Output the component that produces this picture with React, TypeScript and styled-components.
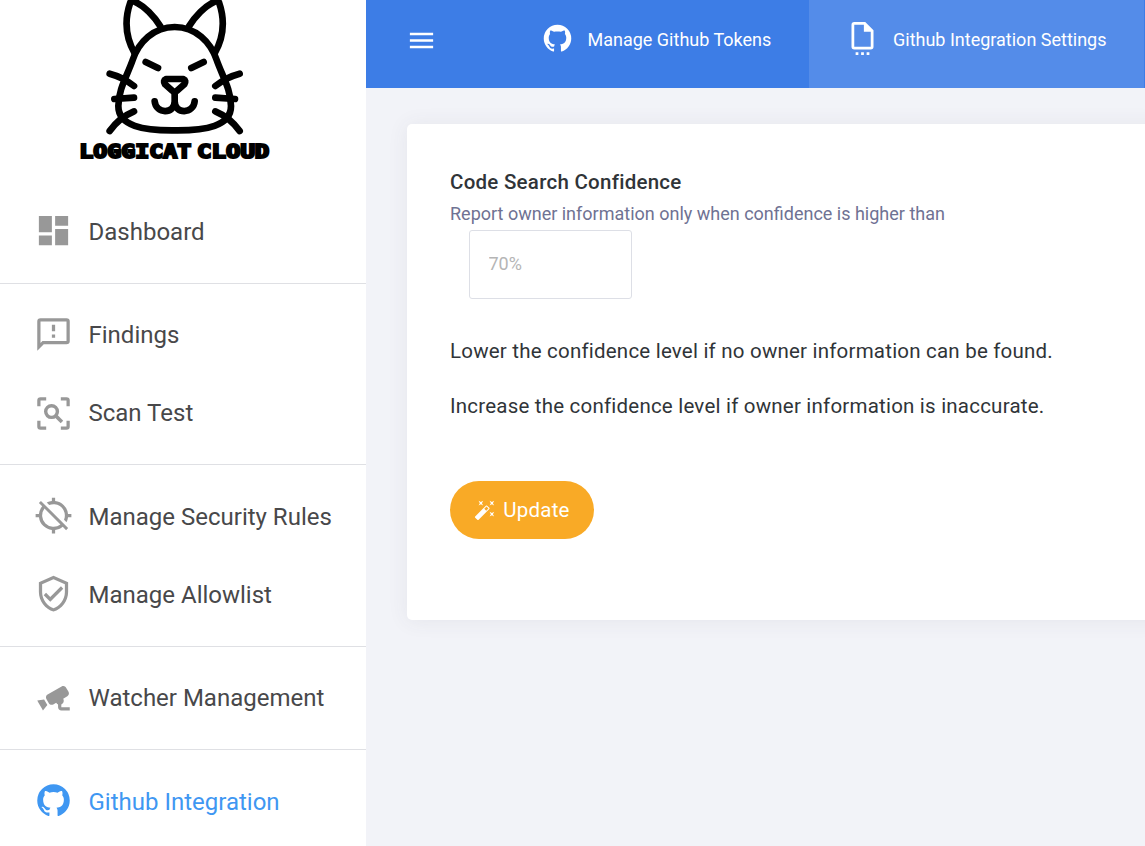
import React from "react";
import styled, { createGlobalStyle } from "styled-components";
import { MdDashboard, MdLocationDisabled } from "react-icons/md";

const GlobalStyle = createGlobalStyle`
  * { box-sizing: border-box; }
  body {
    margin: 0;
    overflow: hidden;
    background: #f2f3f8;
    font-family: Roboto, "Liberation Sans", sans-serif;
  }
`;

const Page = styled.div`
  display: flex;
  height: 846px;
  overflow: hidden;
`;

const Sidebar = styled.aside`
  flex: 0 0 366px;
  background: #fff;
`;

const Brand = styled.div`
  height: 180px;
  padding-left: 70px;
  svg { display: block; }
`;

const NavGroup = styled.nav<{ $top?: number; $bottom?: number }>`
  padding: ${(p) => p.$top ?? 12}px 0 ${(p) => p.$bottom ?? 12}px;
  border-bottom: 1px solid #dfe0e4;
  &:last-child { border-bottom: 0; }
`;

const NavItem = styled.a<{ $active?: boolean; $lift?: number }>`
  display: flex;
  align-items: center;
  height: 78px;
  padding-left: 34px;
  gap: 15.5px;
  font-size: 24px;
  color: ${(p) => (p.$active ? "#3f97f2" : "#48484a")};
  svg {
    flex: none;
    width: 39px;
    height: 39px;
    margin-bottom: ${(p) => p.$lift ?? 1}px;
    color: ${(p) => (p.$active ? "#3f97f2" : "#989898")};
  }
`;

const Main = styled.main`
  flex: 1;
  min-width: 0;
`;

const Header = styled.header`
  display: flex;
  height: 88px;
  background: #3d7de6;
  color: #fff;
`;

const MenuButton = styled.button`
  display: flex;
  width: 137.5px;
  height: 80px;
  padding: 0 0 0 40px;
  align-items: center;
  border: 0;
  background: none;
  color: inherit;
`;

const Tab = styled.a<{ $active?: boolean }>`
  display: flex;
  flex: none;
  width: ${(p) => (p.$active ? 335 : 305.5)}px;
  padding: 0 0 9px 37px;
  align-items: center;
  gap: 14px;
  font-size: 18px;
  white-space: nowrap;
  background: ${(p) => (p.$active ? "#548ce9" : "transparent")};
  svg { margin-bottom: 2px; }
`;

const Card = styled.section`
  margin: 36px 0 0 41px;
  width: 760px;
  height: 496px;
  padding: 44px 43px;
  border-radius: 5px;
  background: #fff;
  box-shadow: 0 1px 20px 1px rgba(69, 65, 78, 0.07);
`;

const Title = styled.h3`
  margin: 0;
  font-size: 20.5px;
  line-height: 28px;
  font-weight: 500;
  letter-spacing: 0.26px;
  color: #303438;
`;

const Hint = styled.p`
  margin: 4px 0 2px;
  font-size: 18px;
  line-height: 28px;
  color: #6f7293;
`;

const Field = styled.input`
  display: block;
  width: 163px;
  height: 69px;
  margin: 0 0 38px 19px;
  padding: 0 18.5px 2px;
  border: 1px solid #dddfe6;
  border-radius: 3px;
  font: 18px Roboto, sans-serif;
  &::placeholder { color: #b5b5b5; opacity: 1; }
`;

const Note = styled.p`
  margin: 0 0 27px;
  font-size: 20.5px;
  line-height: 28px;
  letter-spacing: 0.21px;
  white-space: nowrap;
  color: #303438;
`;

const UpdateButton = styled.button`
  display: flex;
  align-items: center;
  justify-content: center;
  gap: 7px;
  width: 144px;
  height: 58px;
  margin-top: 61px;
  padding: 0;
  border: 0;
  border-radius: 29px;
  background: #f9aa26;
  color: #fff;
  font: 20.5px Roboto, sans-serif;
  letter-spacing: 0.2px;
  svg { margin-bottom: 1px; }
`;

const Wordmark = styled.text`
  font: 700 56px "DejaVu Sans Mono", monospace;
  stroke: #000;
  stroke-width: 6px;
`;

const Glyph = ({ d, size = 39 }: { d: string; size?: number }) => (
  <svg width={size} height={size} viewBox="0 0 24 24" fill="currentColor" fillRule="evenodd">
    <path d={d} />
  </svg>
);

const github =
  "M12,2A10,10 0 0,0 2,12C2,16.42 4.87,20.17 8.84,21.5C9.34,21.58 9.5,21.27 9.5,21C9.5,20.77 9.5,20.14 9.5,19.31C6.73,19.91 6.14,17.97 6.14,17.97C5.68,16.81 5.03,16.5 5.03,16.5C4.12,15.88 5.1,15.9 5.1,15.9C6.1,15.97 6.63,16.93 6.63,16.93C7.5,18.45 8.97,18 9.54,17.76C9.63,17.11 9.89,16.67 10.17,16.42C7.95,16.17 5.62,15.31 5.62,11.5C5.62,10.39 6,9.5 6.65,8.79C6.55,8.54 6.2,7.5 6.75,6.15C6.75,6.15 7.59,5.88 9.5,7.17C10.29,6.95 11.15,6.84 12,6.84C12.85,6.84 13.71,6.95 14.5,7.17C16.41,5.88 17.25,6.15 17.25,6.15C17.8,7.5 17.45,8.54 17.35,8.79C18,9.5 18.38,10.39 18.38,11.5C18.38,15.32 16.04,16.16 13.81,16.41C14.17,16.72 14.5,17.33 14.5,18.26C14.5,19.6 14.5,20.68 14.5,21C14.5,21.27 14.66,21.59 15.17,21.5C19.14,20.16 22,16.42 22,12A10,10 0 0,0 12,2Z";
const message =
  "M13,10H11V6H13V10M13,12H11V14H13V12M22,4V16A2,2 0 0,1 20,18H6L2,22V4A2,2 0 0,1 4,2H20A2,2 0 0,1 22,4M20,4H4V17.2L5.2,16H20V4Z";
const shield =
  "M21,11C21,16.55 17.16,21.74 12,23C6.84,21.74 3,16.55 3,11V5L12,1L21,5V11M12,21C15.75,20 19,15.54 19,11.22V6.3L12,3.18L5,6.3V11.22C5,15.54 8.25,20 12,21M10,17L6,13L7.41,11.59L10,14.17L16.59,7.58L18,9";
const cctv =
  "M18.15,4.94C17.77,4.91 17.37,5 17,5.2L8.35,10.2C7.39,10.76 7.07,12 7.62,12.94L9.12,15.53C9.67,16.5 10.89,16.82 11.85,16.27L13.65,15.23C13.92,15.69 14.32,16.06 14.81,16.27V18.04C14.81,19.13 15.7,20 16.81,20H22V18.04H16.81V16.27C17.72,15.87 18.31,14.97 18.31,14C18.31,13.54 18.19,13.11 17.97,12.73L20.5,11.27C21.47,10.71 21.8,9.5 21.24,8.53L19.74,5.94C19.4,5.34 18.79,5 18.15,4.94M6.22,13.17L2,13.87L2.75,15.17L4.75,18.63L5.5,19.93L8.22,16.63L6.22,13.17Z";
const fileDots =
  "M7,22H9V24H7V22M11,22H13V24H11V22M15,22H17V24H15V22M6,0H14L20,6V18A2,2 0 0,1 18,20H6A2,2 0 0,1 4,18V2A2,2 0 0,1 6,0M6,2V18H18V7H13V2H6Z";
const wand =
  "M7.5,5.6L5,7L6.4,4.5L5,2L7.5,3.4L10,2L8.6,4.5L10,7L7.5,5.6M19.5,15.4L22,14L20.6,16.5L22,19L19.5,17.6L17,19L18.4,16.5L17,14L19.5,15.4M22,2L20.6,4.5L22,7L19.5,5.6L17,7L18.4,4.5L17,2L19.5,3.4L22,2M13.34,12.78L15.78,10.34L13.66,8.22L11.22,10.66L13.34,12.78M14.37,7.29L16.71,9.63C17.1,10 17.1,10.65 16.71,11.04L5.04,22.71C4.65,23.1 4,23.1 3.63,22.71L1.29,20.37C0.9,20 0.9,19.35 1.29,18.96L12.96,7.29C13.35,6.9 14,6.9 14.37,7.29Z";

const ScanIcon = () => (
  <svg viewBox="0 0 24 24" fill="none" stroke="currentColor" strokeWidth="2">
    <path d="M3 7.5V4a1 1 0 0 1 1-1h3.5M16.5 3H20a1 1 0 0 1 1 1v3.5M21 16.5V20a1 1 0 0 1-1 1h-3.5M7.5 21H4a1 1 0 0 1-1-1v-3.5" />
    <circle cx="10.8" cy="10.8" r="3.6" strokeWidth="2.1" />
    <path d="M13.3 13.3L17.2 17.2" strokeWidth="2.2" />
  </svg>
);

const Logo = () => (
  <svg width="210" height="170" viewBox="0 0 630 510">
    <g fill="none" stroke="#000" strokeWidth="20" strokeLinecap="round" strokeLinejoin="round">
      <path d="M194 160C163 105 166 50 181 7Q185 1 194 5C223 18 253 49 271 79" />
      <path d="M434 160C465 105 462 50 447 7Q443 1 434 5C405 18 375 49 357 79" />
      <path d="M314 81C251 81 206 126 188 180C172 226 145 268 145 318C145 378 220 392 314 391C408 392 483 378 483 318C483 268 456 226 440 180C422 126 377 81 314 81Z" />
      <path d="M227 186L264 204M401 186L364 204" />
      <path d="M119 221Q158 231 192 258M509 221Q470 231 436 258" />
      <path d="M133 297L192 293M495 297L436 293" />
      <path d="M192 334Q147 353 119 393M436 334Q481 353 509 393" />
      <path d="M288 237H340Q350 241 343 253L321 272Q314 278 307 272L285 253Q278 241 288 237Z" />
      <path d="M314 277V304C314 344 257 342 254 304M314 304C314 344 371 342 374 304" />
    </g>
    <Wordmark x="28" y="474" textLength="336" lengthAdjust="spacingAndGlyphs">LOGGICAT</Wordmark>
    <Wordmark x="381" y="474" textLength="217" lengthAdjust="spacingAndGlyphs">CLOUD</Wordmark>
  </svg>
);

export default function App() {
  return (
    <Page>
      <GlobalStyle />
      <Sidebar>
        <Brand>
          <Logo />
        </Brand>
        <NavGroup $top={13}>
          <NavItem $lift={3}><MdDashboard />Dashboard</NavItem>
        </NavGroup>
        <NavGroup>
          <NavItem><Glyph d={message} />Findings</NavItem>
          <NavItem $lift={0}><ScanIcon />Scan Test</NavItem>
        </NavGroup>
        <NavGroup $top={13}>
          <NavItem $lift={3}><MdLocationDisabled />Manage Security Rules</NavItem>
          <NavItem $lift={3}><Glyph d={shield} />Manage Allowlist</NavItem>
        </NavGroup>
        <NavGroup>
          <NavItem><Glyph d={cctv} />Watcher Management</NavItem>
        </NavGroup>
        <NavGroup $top={13}>
          <NavItem $active $lift={3}><Glyph d={github} />Github Integration</NavItem>
        </NavGroup>
      </Sidebar>
      <Main>
        <Header>
          <MenuButton aria-label="Menu">
            <Glyph size={31} d="M3,6H21V8H3V6M3,11H21V13H3V11M3,16H21V18H3V16Z" />
          </MenuButton>
          <Tab><Glyph size={33} d={github} />Manage Github Tokens</Tab>
          <Tab $active><Glyph size={33} d={fileDots} />Github Integration Settings</Tab>
        </Header>
        <Card>
          <Title>Code Search Confidence</Title>
          <Hint>Report owner information only when confidence is higher than</Hint>
          <Field placeholder="70%" />
          <Note>Lower the confidence level if no owner information can be found.</Note>
          <Note>Increase the confidence level if owner information is inaccurate.</Note>
          <UpdateButton><Glyph size={22} d={wand} />Update</UpdateButton>
        </Card>
      </Main>
    </Page>
  );
}
